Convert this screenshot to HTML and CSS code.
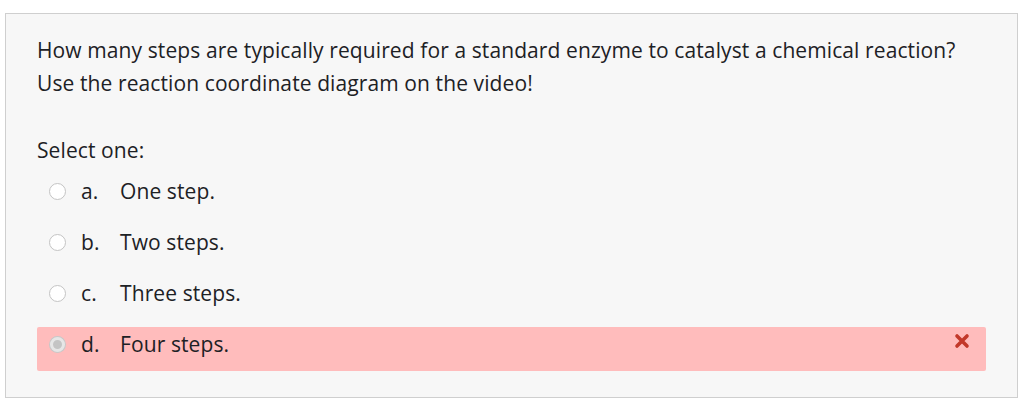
FILE: index.html
```html
<!DOCTYPE html>
<html>
<head>
<meta charset="utf-8">
<link rel="stylesheet" href="styles.css">
</head>
<body>
<div class="que">
  <div class="qtext">
    <p>How many steps are typically required for a standard enzyme to catalyst a chemical reaction?<br>Use the reaction coordinate diagram on the video!</p>
  </div>
  <div class="prompt">Select one:</div>
  <div class="answers">
    <div class="opt"><span class="radio"></span><span class="letter">a.</span><span class="label">One step.</span></div>
    <div class="opt"><span class="radio"></span><span class="letter">b.</span><span class="label">Two steps.</span></div>
    <div class="opt"><span class="radio"></span><span class="letter">c.</span><span class="label">Three steps.</span></div>
    <div class="opt incorrect"><span class="radio checked"></span><span class="letter">d.</span><span class="label">Four steps.</span>
      <svg class="xicon" width="16" height="16" viewBox="0 0 16 16"><path d="M3 3 L13 13 M13 3 L3 13" stroke="#c2382a" stroke-width="3.6" stroke-linecap="round"/></svg>
    </div>
  </div>
</div>
</body>
</html>
```
FILE: styles.css
```css
html, body { margin: 0; padding: 0; background: #fff; }
body { padding: 13px 6px 0 5px; font-family: "Open Sans", "Noto Sans", sans-serif; color: #1d2125; }
.que {
  box-sizing: border-box;
  width: 1013px;
  height: 385px;
  background: #f7f7f7;
  border: 1px solid #cfcfcf;
  padding: 20px 31px 0 31px;
}
.qtext p { margin: 0; font-size: 21px; letter-spacing: 0.1px; line-height: 33px; }
.prompt { margin-top: 35px; font-size: 21px; line-height: 30px; letter-spacing: 0.1px; }
.answers { margin-top: 9px; display: flex; flex-direction: column; gap: 7px; }
.opt {
  display: flex; align-items: flex-start; height: 44px; font-size: 21px; line-height: 29px;
  letter-spacing: 0.1px; padding-top: 3px; box-sizing: border-box;
  padding-left: 12px; position: relative; border-radius: 2px;
}
.opt.incorrect { background: #ffbcbc; }
.radio {
  width: 17px; height: 17px; border-radius: 50%; border: 1.5px solid #c4c4c4;
  background: #fff; box-sizing: border-box; margin-right: 15px; margin-top: 6px;
}
.radio.checked { background: #c4c4c4; border: 3px solid #e6e6e6; box-shadow: 0 0 0 1px #c8c8c8; width: 15px; height: 15px; margin-left: 1px; margin-right: 16px; margin-top: 7px; }
.letter { width: 39px; }
.xicon { position: absolute; right: 16px; top: 6px; }
```
